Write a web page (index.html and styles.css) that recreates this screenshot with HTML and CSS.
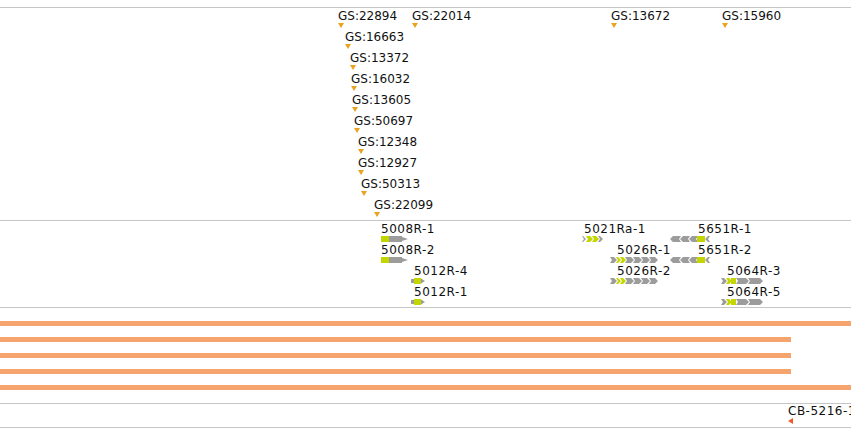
FILE: index.html
```html
<!DOCTYPE html>
<html lang="en">
<head>
  <meta charset="UTF-8">
  <title>Tracks</title>
  <link rel="stylesheet" href="styles.css">
</head>
<body>
  <div class="ruler"></div>
  <div class="track track-markers" id="track-markers"></div>
  <div class="track track-genes" id="track-genes"></div>
  <div class="track track-bars">
    <div class="bar bar-full"></div>
    <div class="bar bar-part"></div>
    <div class="bar bar-part"></div>
    <div class="bar bar-part"></div>
    <div class="bar bar-full"></div>
  </div>
  <div class="track track-clones">
    <div class="lane">
      <div class="feature" style="left:788px">
        <span class="label label-gene">CB-5216-1</span>
        <div class="tri-left"></div>
      </div>
    </div>
  </div>

  <script>
    // marker lanes: [name, x]
    const markers = [
      [['GS:22894', 338], ['GS:22014', 412], ['GS:13672', 611], ['GS:15960', 722]],
      [['GS:16663', 345]],
      [['GS:13372', 350]],
      [['GS:16032', 351]],
      [['GS:13605', 352]],
      [['GS:50697', 354]],
      [['GS:12348', 358]],
      [['GS:12927', 358]],
      [['GS:50313', 361]],
      [['GS:22099', 374]]
    ];

    // gene lanes: [name, glyph x, label x, glyph type]
    const genes = [
      [['5008R-1', 381, 381, 'long'], ['5021Ra-1', 582, 584, 'ra'], ['5651R-1', 670, 698, 'rev']],
      [['5008R-2', 381, 381, 'long'], ['5026R-1', 610, 617, 'multi'], ['5651R-2', 670, 698, 'rev']],
      [['5012R-4', 411, 414, 'short'], ['5026R-2', 610, 617, 'multi'], ['5064R-3', 721, 727, 'mixed']],
      [['5012R-1', 411, 414, 'short'], ['5064R-5', 721, 727, 'mixed']]
    ];

    const G = '#c4d600', X = '#9c9c9c';

    // chevron segment, pointing right or left
    function seg(x, w, c, left) {
      const p = left
        ? [[x + w, 0], [x + 3, 0], [x, 3], [x + 3, 6], [x + w, 6], [x + w - 2, 3]]
        : [[x, 0], [x + w - 3, 0], [x + w, 3], [x + w - 3, 6], [x, 6], [x + 2, 3]];
      return `<polygon fill="${c}" points="${p.map(q => q.join(',')).join(' ')}"/>`;
    }
    function rect(x, w, c) {
      return `<rect x="${x}" y="0" width="${w}" height="6" fill="${c}"/>`;
    }

    const glyphs = {
      long: [28, rect(0, 8, G) + `<polygon fill="${X}" points="8,0 21,0 21,1 27,3 21,5 21,6 8,6"/>`],
      short: [14, `<rect x="0" y="1" width="3" height="4" fill="${X}"/>` + rect(3, 7, G) + `<polygon fill="${X}" points="10,0.5 14,3 10,5.5"/>`],
      ra: [21, seg(0, 4, X) + seg(4, 7, G) + seg(10, 7, G) + seg(16, 5, X)],
      multi: [49, seg(0, 7, X) + seg(6, 5, G) + seg(10, 6, G) + seg(15, 9, X) + seg(23, 9, X) + seg(31, 9, X) + seg(39, 9, X)],
      rev: [41, seg(0, 11, X, true) + seg(10, 10, X, true) + seg(19, 9, X, true) + rect(27, 8, G) + seg(35, 5, X, true)],
      mixed: [46, seg(0, 6, X) + seg(5, 6, G) + rect(10, 5, G) + seg(15, 13, X) + seg(27, 15, X)]
    };

    const markerTrack = document.getElementById('track-markers');
    markers.forEach(row => {
      let html = '';
      row.forEach(([name, x]) => {
        html += `<div class="feature" style="left:${x}px"><span class="label">${name}</span><div class="tri-down"></div></div>`;
      });
      markerTrack.innerHTML += `<div class="lane">${html}</div>`;
    });

    const geneTrack = document.getElementById('track-genes');
    genes.forEach(row => {
      let html = '';
      row.forEach(([name, x, lx, type]) => {
        const [w, body] = glyphs[type];
        html += `<div class="feature" style="left:${x}px">
          <span class="label label-gene" style="margin-left:${lx - x}px">${name}</span>
          <svg class="glyph" width="${w}" height="6" viewBox="0 0 ${w} 6">${body}</svg>
        </div>`;
      });
      geneTrack.innerHTML += `<div class="lane">${html}</div>`;
    });
  </script>
</body>
</html>
```

FILE: styles.css
```css
body {
  margin: 0;
  width: 851px;
  height: 428px;
  overflow: hidden;
  background: white;
  font-family: 'DejaVu Sans', sans-serif;
  font-size: 12px;
  color: #111;
}
.ruler {
  height: 7px;
  border-bottom: 1px solid #c6c6c6;
}
.track {
  display: flex;
  flex-direction: column;
  border-bottom: 1px solid #c6c6c6;
}
.track-markers {
  height: 211px;
  padding-top: 1px;
}
.track-genes {
  height: 85px;
  padding-top: 1px;
}
.track-bars {
  height: 82px;
  padding-top: 13px;
  gap: 11px;
}
.track-clones {
  height: 23px;
}
.lane {
  position: relative;
  height: 21px;
  flex: none;
}
.feature {
  position: absolute;
  top: 0;
  white-space: nowrap;
}
.label {
  display: block;
  height: 14px;
  line-height: 14px;
}
.label-gene {
  letter-spacing: 0.5px;
}
.glyph {
  display: block;
}
.tri-down {
  width: 0;
  height: 0;
  border-left: 3px solid transparent;
  border-right: 3px solid transparent;
  border-top: 5px solid #eba21e;
}
.tri-left {
  width: 0;
  height: 0;
  border-top: 3.5px solid transparent;
  border-bottom: 3.5px solid transparent;
  border-right: 5px solid #f05a28;
}
.bar {
  height: 5px;
  background: #f4a46c;
  flex: none;
}
.bar-full {
  width: 100%;
}
.bar-part {
  width: 791px;
}
```
